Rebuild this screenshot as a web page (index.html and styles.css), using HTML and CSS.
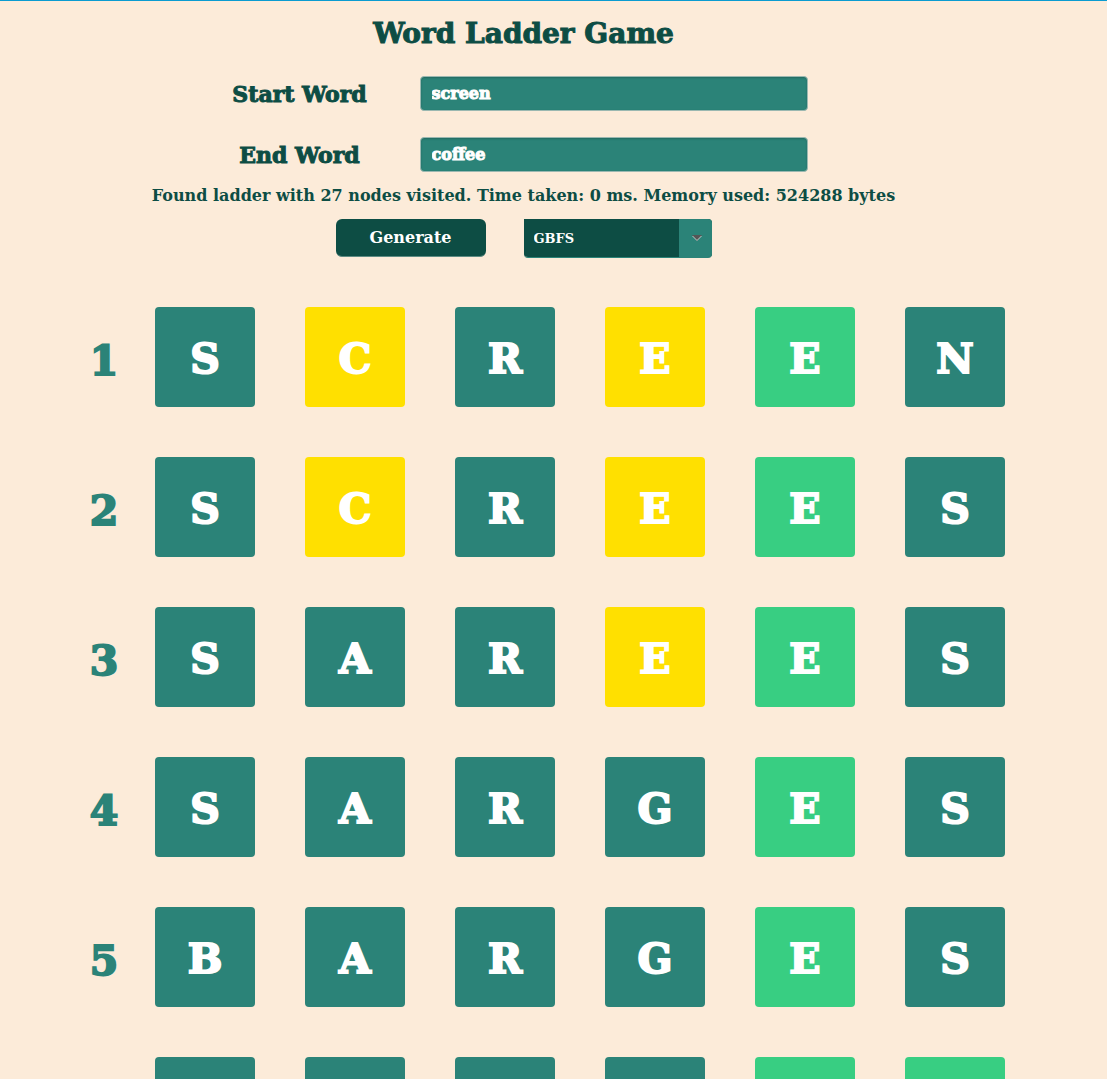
FILE: index.html
```html
<!DOCTYPE html>
<html lang="en">
<head>
<meta charset="utf-8">
<meta name="viewport" content="width=device-width, initial-scale=1">
<title>Word Ladder Game</title>
<link rel="stylesheet" href="styles.css">
</head>
<body>
<main class="app">
  <form class="controls">
    <h1 class="title">Word Ladder Game</h1>
    <div class="fields">
      <label class="field-label" for="start">Start Word</label>
      <input class="field" id="start" type="text" value="screen">
      <label class="field-label" for="end">End Word</label>
      <input class="field" id="end" type="text" value="coffee">
    </div>
    <p class="status">Found ladder with 27 nodes visited. Time taken: 0 ms. Memory used: 524288 bytes</p>
    <div class="actions">
      <button class="generate" type="button">Generate</button>
      <div class="picker">
        <select class="algorithm" aria-label="Algorithm">
          <option>GBFS</option>
          <option>UCS</option>
          <option>A*</option>
        </select>
        <span class="picker-arrow">
          <svg width="10" height="7" viewBox="0 0 10 7" aria-hidden="true"><path d="M0 0h10L5 6z" fill="#555"/><path d="M0.5 1L5 5.5L9.500 1" fill="none" stroke="#c2cbc7"/></svg>
        </span>
      </div>
    </div>
  </form>
  <ol class="ladder">
    <li class="rung"><span class="number">1</span><span class="tile">S</span><span class="tile near">C</span><span class="tile">R</span><span class="tile near">E</span><span class="tile match">E</span><span class="tile">N</span></li>
    <li class="rung"><span class="number">2</span><span class="tile">S</span><span class="tile near">C</span><span class="tile">R</span><span class="tile near">E</span><span class="tile match">E</span><span class="tile">S</span></li>
    <li class="rung"><span class="number">3</span><span class="tile">S</span><span class="tile">A</span><span class="tile">R</span><span class="tile near">E</span><span class="tile match">E</span><span class="tile">S</span></li>
    <li class="rung"><span class="number">4</span><span class="tile">S</span><span class="tile">A</span><span class="tile">R</span><span class="tile">G</span><span class="tile match">E</span><span class="tile">S</span></li>
    <li class="rung"><span class="number">5</span><span class="tile">B</span><span class="tile">A</span><span class="tile">R</span><span class="tile">G</span><span class="tile match">E</span><span class="tile">S</span></li>
    <li class="rung"><span class="number"></span><span class="tile"></span><span class="tile"></span><span class="tile"></span><span class="tile"></span><span class="tile match"></span><span class="tile match"></span></li>
  </ol>
</main>
</body>
</html>
```
FILE: styles.css
```css
:root {
  --paper: #fcebd9;
  --teal: #2b8378;
  --dark: #0d4d44;
  --near: #ffe000;
  --match: #38ce82;
}

* {
  box-sizing: border-box;
}

body {
  margin: 0;
  height: 100vh;
  overflow: hidden;
  border-top: 1px solid #0a9bd0;
  background: var(--paper);
  color: var(--dark);
  font-family: "Cooper Black", "DejaVu Serif", serif;
  font-weight: bold;
  -webkit-text-stroke: 1px;
}

.controls {
  display: flex;
  flex-direction: column;
  align-items: center;
  padding: 13px 60px 0 0;
}

.title {
  margin: 0;
  font-size: 28px;
  line-height: 40px;
}

.fields {
  display: grid;
  grid-template-columns: 140px 388px;
  gap: 26px 50px;
  align-items: center;
  margin: 22px 10px 0 0;
}

.field-label {
  font-size: 22px;
  line-height: 24px;
  text-align: center;
  white-space: nowrap;
}

.field {
  width: 100%;
  height: 35px;
  padding: 0 11px;
  border: 1px solid #9bb8b1;
  border-radius: 4px;
  box-shadow: inset 0 1px 2px #23695f;
  background: var(--teal);
  color: #fff;
  font: inherit;
  font-size: 16px;
}

.status {
  margin: 12px 0 0;
  font-size: 16px;
  line-height: 24px;
  white-space: nowrap;
  -webkit-text-stroke: 0;
}

.actions {
  display: flex;
  gap: 38px;
  margin-top: 11px;
}

.generate {
  width: 150px;
  height: 38px;
  border: 0;
  border-bottom: 1px solid #5d8b83;
  border-radius: 6px;
  background: var(--dark);
  color: #fff;
  font: inherit;
  font-size: 16px;
  -webkit-text-stroke: 0;
}

.picker {
  position: relative;
  width: 188px;
  height: 39px;
  overflow: hidden;
  border-bottom: 1px solid var(--teal);
  border-radius: 0 4px 4px 4px;
}

.algorithm {
  width: 100%;
  height: 100%;
  padding: 0 10px;
  appearance: none;
  border: 0;
  border-radius: 0;
  background: var(--dark);
  color: #fff;
  font: inherit;
  font-size: 13px;
  -webkit-text-stroke: 0;
}

.picker-arrow {
  position: absolute;
  inset: 0 0 0 auto;
  display: flex;
  align-items: center;
  justify-content: center;
  width: 33px;
  padding-left: 3px;
  background: var(--teal);
  pointer-events: none;
}

.ladder {
  display: flex;
  flex-direction: column;
  align-items: center;
  gap: 50px;
  margin: 49px 0 0;
  padding: 0 49px 0 0;
  list-style: none;
}

.rung {
  display: grid;
  grid-template-columns: 102px repeat(6, 100px);
  column-gap: 50px;
  margin-left: -50px;
  font-size: 41px;
  line-height: 104px;
  text-align: center;
  -webkit-text-stroke: 2px;
}

.number {
  height: 100px;
  margin-right: -50px;
  margin-left: 50px;
  color: var(--teal);
  line-height: 108px;
}

.tile {
  height: 100px;
  border-radius: 4px;
  background: var(--teal);
  color: #fff;
}

.near {
  background: var(--near);
}

.match {
  background: var(--match);
}
```
